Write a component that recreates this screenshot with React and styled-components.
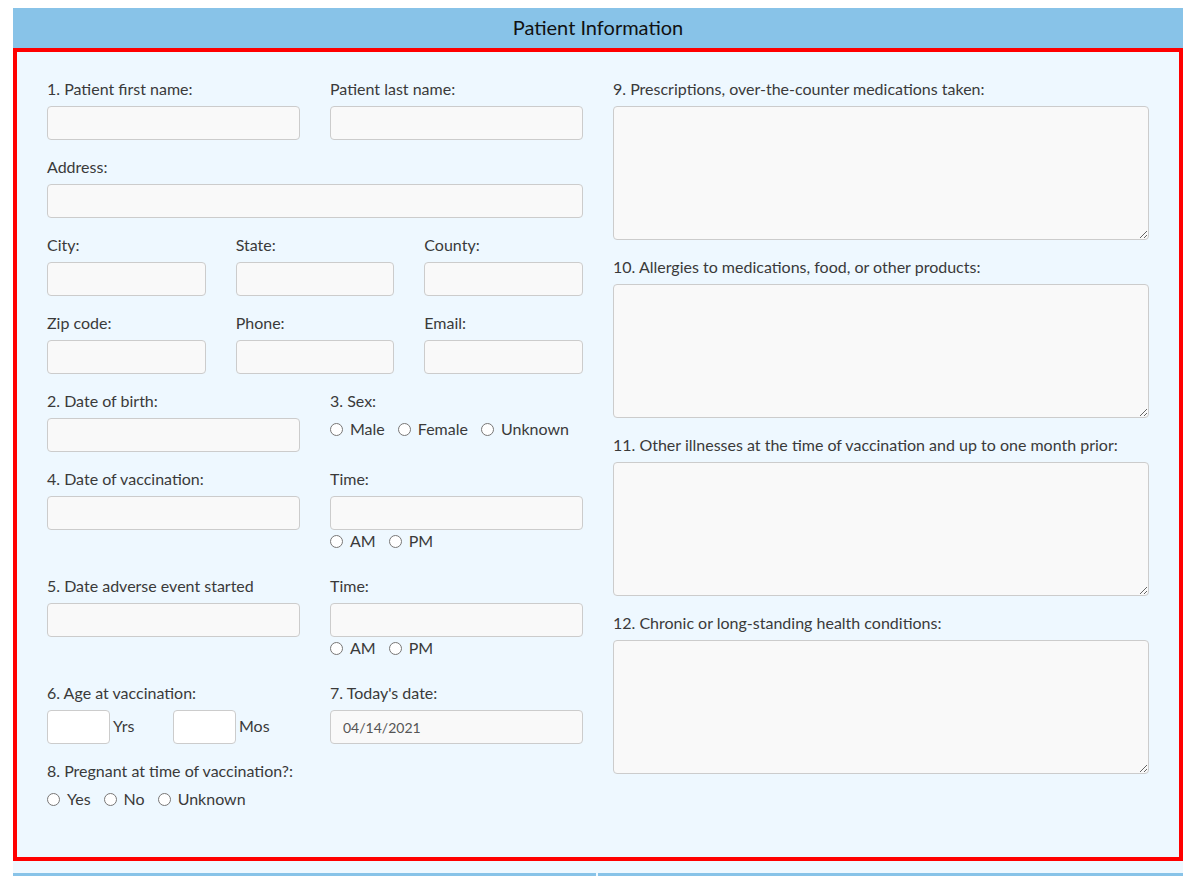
import React from "react";
import styled, { createGlobalStyle } from "styled-components";

const GlobalStyle = createGlobalStyle`
  body {
    margin: 0;
    background: #ffffff;
    font-family: "Lato", "Liberation Sans", sans-serif;
  }
`;

const Page = styled.div`
  padding: 8px 11px 0 13px;
`;

const Section = styled.div`
  width: 1170px;
  background-color: #eef8ff;
`;

const SectionTitle = styled.div`
  height: 40px;
  line-height: 39px;
  background-color: #88c3e8;
  color: #111111;
  font-size: 20px;
  text-align: center;
`;

const FormBox = styled.div`
  display: grid;
  grid-template-columns: 1fr 1fr;
  column-gap: 30px;
  padding: 27px 30px 28px;
  border: 4px solid #ff0000;
  background-color: #eef8ff;
`;

const Column = styled.div`
  display: flex;
  flex-direction: column;
`;

const Row = styled.div`
  display: grid;
  grid-template-columns: repeat(${(p) => p.$cols}, 1fr);
  column-gap: 30px;
  align-items: start;
`;

const Field = styled.div`
  margin-bottom: 17px;
`;

const Label = styled.label`
  display: block;
  margin-bottom: 7px;
  font-size: 16px;
  line-height: 20px;
  color: #3a3a3a;
`;

const TextInput = styled.input`
  display: block;
  box-sizing: border-box;
  width: 100%;
  height: 34px;
  padding: 0 12px;
  border: 1px solid #cccccc;
  border-radius: 4px;
  background-color: #f9f9f9;
  font-family: "Lato", "Liberation Sans", sans-serif;
  font-size: 14px;
  color: #555555;
  outline: none;
`;

const TextArea = styled.textarea`
  display: block;
  box-sizing: border-box;
  width: 100%;
  height: 134px;
  margin: 0;
  padding: 6px 12px;
  border: 1px solid #cccccc;
  border-radius: 4px;
  background-color: #f9f9f9;
  font-family: "Lato", "Liberation Sans", sans-serif;
  resize: vertical;
  outline: none;
`;

const RadioRow = styled.div`
  display: flex;
  align-items: center;
  box-sizing: border-box;
  height: 24px;
  padding-bottom: 2px;
  margin-bottom: ${(p) => (p.$extra ? "5px" : "0")};
`;

const RadioLabel = styled.label`
  display: inline-flex;
  align-items: center;
  margin-right: 13px;
  font-size: 16px;
  line-height: 20px;
  color: #3a3a3a;
`;

const Radio = styled.input.attrs({ type: "radio" })`
  width: 13px;
  height: 13px;
  margin: 1px 7px 0 0;
`;

const AgeLine = styled.div`
  display: flex;
  align-items: center;
`;

const AgeGroup = styled.div`
  display: flex;
  align-items: center;
  width: 126px;
`;

const AgeInput = styled(TextInput)`
  width: 63px;
  background-color: #ffffff;
`;

const Unit = styled.span`
  margin-left: 3px;
  padding-bottom: 3px;
  font-size: 16px;
  color: #3a3a3a;
`;

const NextHeaders = styled.div`
  display: grid;
  grid-template-columns: 583px 1fr;
  column-gap: 2px;
  margin-top: 12px;
`;

const NextBar = styled.div`
  height: 40px;
  background-color: #88c3e8;
`;

const Radios = ({ name, options, extra }) => (
  <RadioRow $extra={extra}>
    {options.map((opt) => (
      <RadioLabel key={opt}>
        <Radio name={name} />
        {opt}
      </RadioLabel>
    ))}
  </RadioRow>
);

const App = () => {
  return (
    <Page>
      <GlobalStyle />
      <Section>
        <SectionTitle>Patient Information</SectionTitle>
        <FormBox>
          <Column>
            <Row $cols={2}>
              <Field>
                <Label>1. Patient first name:</Label>
                <TextInput />
              </Field>
              <Field>
                <Label>Patient last name:</Label>
                <TextInput />
              </Field>
            </Row>
            <Field>
              <Label>Address:</Label>
              <TextInput />
            </Field>
            <Row $cols={3}>
              <Field>
                <Label>City:</Label>
                <TextInput />
              </Field>
              <Field>
                <Label>State:</Label>
                <TextInput />
              </Field>
              <Field>
                <Label>County:</Label>
                <TextInput />
              </Field>
            </Row>
            <Row $cols={3}>
              <Field>
                <Label>Zip code:</Label>
                <TextInput />
              </Field>
              <Field>
                <Label>Phone:</Label>
                <TextInput />
              </Field>
              <Field>
                <Label>Email:</Label>
                <TextInput />
              </Field>
            </Row>
            <Row $cols={2}>
              <Field>
                <Label>2. Date of birth:</Label>
                <TextInput />
              </Field>
              <Field>
                <Label>3. Sex:</Label>
                <Radios name="sex" options={["Male", "Female", "Unknown"]} />
              </Field>
            </Row>
            <Row $cols={2}>
              <Field>
                <Label>4. Date of vaccination:</Label>
                <TextInput />
              </Field>
              <Field>
                <Label>Time:</Label>
                <TextInput />
                <Radios name="vaxTime" options={["AM", "PM"]} extra />
              </Field>
            </Row>
            <Row $cols={2}>
              <Field>
                <Label>5. Date adverse event started</Label>
                <TextInput />
              </Field>
              <Field>
                <Label>Time:</Label>
                <TextInput />
                <Radios name="eventTime" options={["AM", "PM"]} extra />
              </Field>
            </Row>
            <Row $cols={2}>
              <Field>
                <Label>6. Age at vaccination:</Label>
                <AgeLine>
                  <AgeGroup>
                    <AgeInput />
                    <Unit>Yrs</Unit>
                  </AgeGroup>
                  <AgeGroup>
                    <AgeInput />
                    <Unit>Mos</Unit>
                  </AgeGroup>
                </AgeLine>
              </Field>
              <Field>
                <Label>7. Today's date:</Label>
                <TextInput defaultValue="04/14/2021" readOnly />
              </Field>
            </Row>
            <Field>
              <Label>8. Pregnant at time of vaccination?:</Label>
              <Radios name="pregnant" options={["Yes", "No", "Unknown"]} />
            </Field>
          </Column>
          <Column>
            <Field>
              <Label>9. Prescriptions, over-the-counter medications taken:</Label>
              <TextArea />
            </Field>
            <Field>
              <Label>10. Allergies to medications, food, or other products:</Label>
              <TextArea />
            </Field>
            <Field>
              <Label>11. Other illnesses at the time of vaccination and up to one month prior:</Label>
              <TextArea />
            </Field>
            <Field>
              <Label>12. Chronic or long-standing health conditions:</Label>
              <TextArea />
            </Field>
          </Column>
        </FormBox>
        <NextHeaders>
          <NextBar />
          <NextBar />
        </NextHeaders>
      </Section>
    </Page>
  );
};

export default App;
